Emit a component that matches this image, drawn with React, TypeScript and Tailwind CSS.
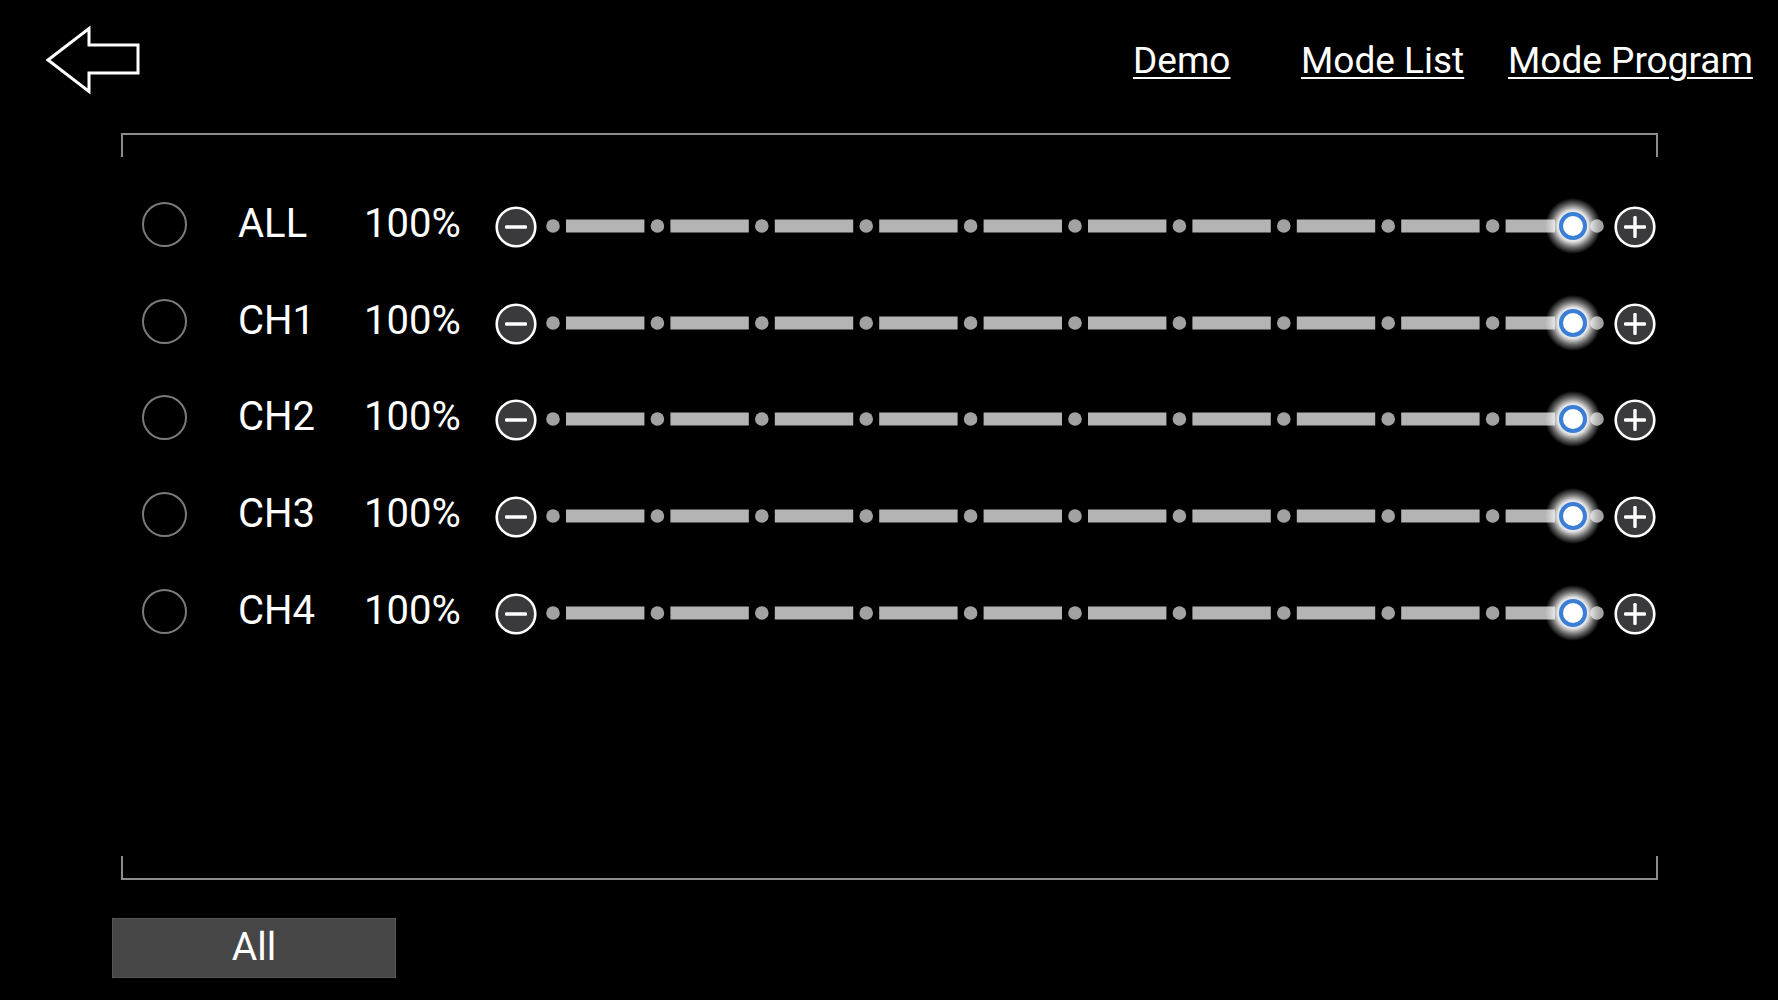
import React from "react";

const rows = ["ALL", "CH1", "CH2", "CH3", "CH4"];

function RoundBtn({ plus }: { plus?: boolean }) {
  return (
    <svg width="42" height="42" viewBox="0 0 42 42" className="shrink-0 mt-[6px]">
      <circle cx="21" cy="21" r="19.3" fill="#3a3a3c" stroke="#ffffff" strokeWidth="2.6" />
      <rect x="10" y="19.3" width="22" height="3.4" rx="1.2" fill="#ffffff" />
      {plus && <rect x="19.3" y="10" width="3.4" height="22" rx="1.2" fill="#ffffff" />}
    </svg>
  );
}

function Track({ id }: { id: string }) {
  const dots = Array.from({ length: 11 }, (_, k) => 8 + 104.4 * k);
  const cy = 31;
  return (
    <svg width="1060" height="60" viewBox="0 0 1060 60" className="shrink-0 overflow-visible mt-[2px]">
      <defs>
        <radialGradient id={`glow-${id}`} cx="50%" cy="50%" r="50%">
          <stop offset="0%" stopColor="#ffffff" stopOpacity="1" />
          <stop offset="55%" stopColor="#ffffff" stopOpacity="0.9" />
          <stop offset="78%" stopColor="#ffffff" stopOpacity="0.4" />
          <stop offset="100%" stopColor="#ffffff" stopOpacity="0" />
        </radialGradient>
      </defs>
      {dots.slice(0, 10).map((x, k) => {
        const x1 = x + 13;
        const x2 = k === 9 ? 1010 : dots[k + 1] - 13;
        return <rect key={`b${k}`} x={x1} y={cy - 6.5} width={x2 - x1} height="13" fill="#b4b4b4" />;
      })}
      {dots.map((x, k) => (
        <circle key={`d${k}`} cx={x} cy={cy} r="6.8" fill="#a2a2a2" />
      ))}
      <circle cx="1028" cy={cy} r="28" fill={`url(#glow-${id})`} />
      <circle cx="1028" cy={cy} r="12" fill="#ffffff" stroke="#3a7ed6" strokeWidth="4" />
    </svg>
  );
}

export default function App() {
  return (
    <div className="w-[1778px] h-[1000px] bg-black overflow-hidden text-white font-['Roboto',sans-serif]">
      {/* header */}
      <div className="flex items-start h-[133px]">
        <svg width="100" height="70" viewBox="0 0 100 70" className="ml-[44px] mt-[25px] shrink-0">
          <polygon
            points="4,35 45,3.5 45,20 94,20 94,48 45,48 45,66.5"
            fill="none"
            stroke="#ffffff"
            strokeWidth="3"
            strokeLinejoin="miter"
          />
        </svg>
        <div className="flex ml-[989px] mt-[43px] text-[37px] leading-[36px]">
          <span className="w-[168px] underline underline-offset-[4px] decoration-2">Demo</span>
          <span className="w-[207px] underline underline-offset-[4px] decoration-2">Mode List</span>
          <span className="underline underline-offset-[4px] decoration-2 whitespace-nowrap">Mode Program</span>
        </div>
      </div>

      {/* framed area */}
      <div className="ml-[121px] w-[1537px]">
        <div className="h-[24px] border-t-[2.5px] border-l-[2.5px] border-r-[2.5px] border-[#8c8c8c]" />
        <div className="pt-[19px] flex flex-col">
          {rows.map((r) => (
            <div key={r} className="h-[96.6px] flex items-center pl-[21px]">
              <div className="w-[45px] h-[45px] rounded-full border-[2.5px] border-[#7a7a7a] shrink-0 mt-[1px]" />
              <div className="w-[126px] ml-[51px] text-[40px] leading-none shrink-0">{r}</div>
              <div className="w-[97px] text-[40px] leading-none shrink-0 whitespace-nowrap">100%</div>
              <div className="ml-[34px] flex items-center">
                <RoundBtn />
              </div>
              <div className="ml-[8px] flex items-center">
                <Track id={r} />
              </div>
              <div className="ml-[9px] flex items-center">
                <RoundBtn plus />
              </div>
            </div>
          ))}
        </div>
        <div className="mt-[197px] h-[24px] border-b-[2.5px] border-l-[2.5px] border-r-[2.5px] border-[#8c8c8c]" />
      </div>

      {/* bottom button */}
      <div className="ml-[112px] mt-[38px] w-[284px] h-[60px] bg-[#464646] border border-[#565656] flex items-center justify-center text-[39px] leading-none">
        All
      </div>
    </div>
  );
}
